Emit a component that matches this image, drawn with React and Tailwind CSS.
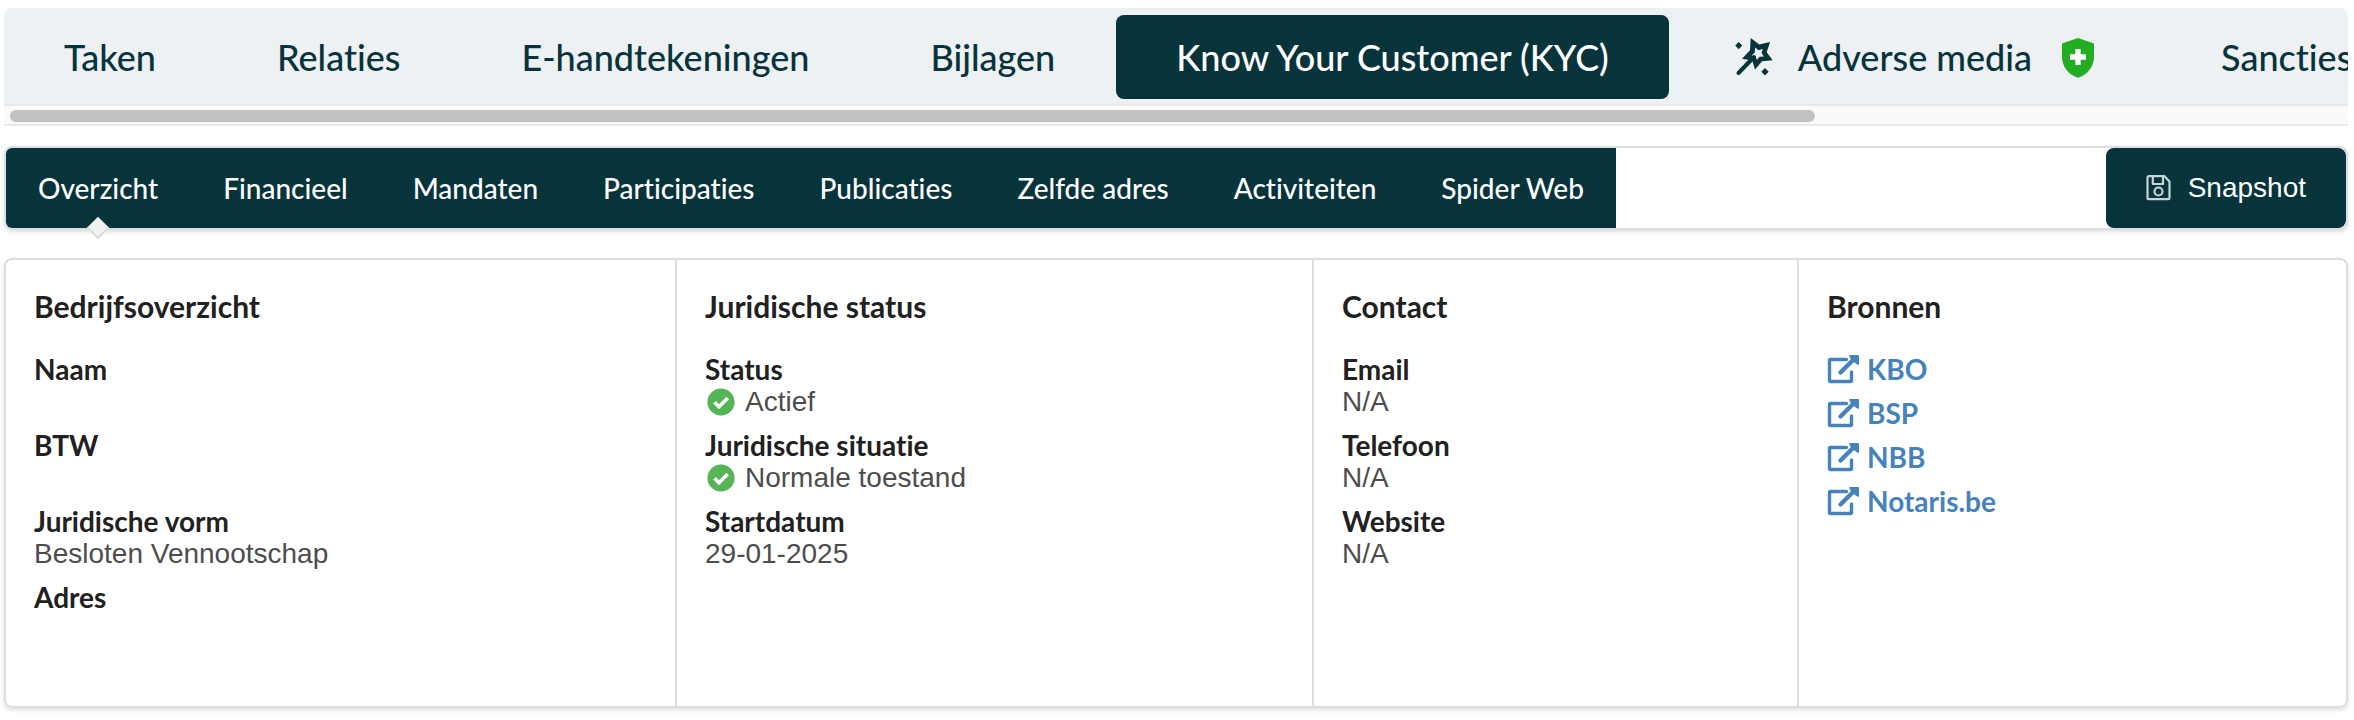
const TABS = [
  { label: "Taken" },
  { label: "Relaties" },
  { label: "E-handtekeningen" },
  { label: "Bijlagen" },
  { label: "Know Your Customer (KYC)", active: true },
  { label: "Adverse media", before: <WandIcon />, after: <ShieldIcon /> },
  { label: "Sancties" },
];

const SECTIONS = [
  "Overzicht",
  "Financieel",
  "Mandaten",
  "Participaties",
  "Publicaties",
  "Zelfde adres",
  "Activiteiten",
  "Spider Web",
];

const COMPANY = [
  { label: "Naam", value: "" },
  { label: "BTW", value: "" },
  { label: "Juridische vorm", value: "Besloten Vennootschap" },
  { label: "Adres", value: "", tall: true },
];

const LEGAL = [
  { label: "Status", value: "Actief", ok: true },
  { label: "Juridische situatie", value: "Normale toestand", ok: true },
  { label: "Startdatum", value: "29-01-2025" },
];

const CONTACT = [
  { label: "Email", value: "N/A" },
  { label: "Telefoon", value: "N/A" },
  { label: "Website", value: "N/A" },
];

const SOURCES = ["KBO", "BSP", "NBB", "Notaris.be"];

function WandIcon() {
  return (
    <svg viewBox="0 0 44 44" className="size-11 shrink-0" aria-hidden="true">
      <path d="M24 22 8.500 38" stroke="#07333b" strokeWidth="4" strokeLinecap="round" />
      <path
        fill="#07333b"
        fillRule="evenodd"
        d="M20.700 3 29.300 9.500 40 7 36.700 17.300 42.700 25.300 32 26.300 25 34.500 22.300 25.500 12 23.700 20 15.300ZM25.100 12.400 24.800 17.300 21.600 20.700 25.700 21.200 26.800 25 29.600 21.700 33.900 21.400 31.500 18.100 32.800 14 28.500 15.200Z"
      />
      <path fill="#07333b" d="M8.700 7 12.200 10.600 8.700 14.200 5.200 10.600ZM35 33 38.700 36.700 35 40.400 31.300 36.700Z" />
    </svg>
  );
}

function ShieldIcon() {
  return (
    <svg viewBox="0 0 44 44" className="size-11 shrink-0" aria-hidden="true">
      <path fill="#22ad22" d="M22 3 38 8.600V22C38 31.500 31 40.500 22 42.700 13 40.500 6 31.500 6 22V8.600Z" />
      <path fill="#fff" d="M19.300 14h5.400v5.300H30v5.400h-5.300V30h-5.400v-5.300H14v-5.400h5.300Z" />
    </svg>
  );
}

function SaveIcon() {
  return (
    <svg
      viewBox="0 0 28 28"
      className="size-7 shrink-0"
      fill="none"
      stroke="#c6d4da"
      strokeWidth="2.200"
      strokeLinejoin="round"
      aria-hidden="true"
    >
      <path d="M3 2.200H18.500L23.500 7.600V24Q23.500 25.200 22.300 25.200H3Q1.500 25.200 1.500 24V3.600Q1.500 2.200 3 2.200Z" />
      <path d="M6.800 2.600V10H17V2.600" />
      <circle cx="12.500" cy="17.500" r="4" />
    </svg>
  );
}

function CheckIcon() {
  return (
    <svg viewBox="0 0 32 32" className="size-8 shrink-0" aria-hidden="true">
      <circle cx="16" cy="16" r="13.600" fill="#56b456" />
      <path d="M9.500 16.300 14 20.800 22.700 12.100" fill="none" stroke="#fff" strokeWidth="3.600" />
    </svg>
  );
}

function ExternalIcon() {
  return (
    <svg
      viewBox="0 0 32 32"
      className="size-8 shrink-0"
      fill="none"
      stroke="currentColor"
      strokeWidth="3.400"
      strokeLinecap="round"
      aria-hidden="true"
    >
      <path d="M19.500 6.500H3.500Q2.500 6.500 2.500 7.500V27.500Q2.500 28.500 3.500 28.500H23.500Q24.500 28.500 24.500 27.500V19" strokeLinejoin="round" />
      <path d="M13.500 19.500 27 6" strokeWidth="4.400" />
      <path d="M23 2.500H31.500V11.500L28.500 10 23.500 5Z" fill="currentColor" strokeWidth="1" strokeLinejoin="round" />
    </svg>
  );
}

function Tab({ label, active, before, after }) {
  return (
    <button
      type="button"
      className={`flex h-[84px] shrink-0 items-center gap-6 whitespace-nowrap rounded-lg px-[60px] text-[36px] leading-none font-medium ${
        active ? "bg-[#07333b] text-white" : "text-[#07333b]"
      }`}
    >
      {before}
      <span>{label}</span>
      {after}
    </button>
  );
}

function Column({ title, children }) {
  return (
    <section className="border-r-2 border-[#dededf] p-7 last:border-r-0">
      <h2 className="mb-7 text-[30px] leading-9 font-bold text-[#212121]">{title}</h2>
      {children}
    </section>
  );
}

function Details({ items }) {
  return (
    <dl className="flex flex-col gap-2.5 text-[28px]">
      {items.map((item) => (
        <div key={item.label}>
          <dt className="leading-[34px] font-bold text-[#212121]">{item.label}</dt>
          <dd
            className={`flex items-center gap-2 font-['Liberation_Sans',sans-serif] leading-8 text-[#4d4d4d] ${
              item.tall ? "min-h-16" : "min-h-8"
            }`}
          >
            {item.ok && <CheckIcon />}
            {item.value}
          </dd>
        </div>
      ))}
    </dl>
  );
}

export default function App() {
  return (
    <main className="bg-white pt-2 pr-1.5 pb-3 pl-1 font-['Lato',sans-serif] [font-variant-ligatures:none]">
      <div className="mb-5 overflow-hidden rounded-t-lg">
        <nav className="flex gap-px overflow-hidden bg-[#edf1f4] pt-[7px] pb-[5px]">
          {TABS.map((tab) => (
            <Tab key={tab.label} {...tab} />
          ))}
        </nav>
        <div className="border-y-2 border-[#e8e8e8] bg-[#fafafa] px-1.5 pt-1 pb-0.5">
          <div className="h-3 w-[77.400%] rounded-full bg-[#c1c1c1]" />
        </div>
      </div>

      <div className="mb-7 flex justify-between rounded-lg border-2 border-[#dadfe2] shadow-[0_2px_4px_rgba(34,36,38,0.15)]">
        <nav className="flex gap-px rounded-l-md bg-[#07333b]">
          {SECTIONS.map((label, i) => (
            <a
              key={label}
              href="#"
              className="relative flex h-20 items-center whitespace-nowrap px-8 text-[28px] leading-none font-medium text-white"
            >
              {label}
              {i === 0 && (
                <span className="absolute -bottom-2 left-1/2 size-4 -translate-x-1/2 rotate-45 border-r-2 border-b-2 border-[#d9dbdc] bg-[#f2f2f2]" />
              )}
            </a>
          ))}
        </nav>
        <button
          type="button"
          className="flex h-20 items-center gap-3.5 rounded-lg bg-[#07333b] px-10 font-['Liberation_Sans',sans-serif] text-[28px] leading-none text-white"
        >
          <SaveIcon />
          Snapshot
        </button>
      </div>

      <div className="grid grid-cols-[671fr_637fr_485fr_547fr] rounded-lg border-2 border-[#dededf] shadow-[0_2px_4px_rgba(34,36,38,0.15)]">
        <Column title="Bedrijfsoverzicht">
          <Details items={COMPANY} />
        </Column>
        <Column title="Juridische status">
          <Details items={LEGAL} />
        </Column>
        <Column title="Contact">
          <Details items={CONTACT} />
        </Column>
        <Column title="Bronnen">
          <ul className="flex flex-col items-start gap-2.5 text-[28px] leading-[34px] font-bold text-[#4682bd]">
            {SOURCES.map((name) => (
              <li key={name}>
                <a href="#" className="flex items-center gap-2">
                  <ExternalIcon />
                  {name}
                </a>
              </li>
            ))}
          </ul>
        </Column>
      </div>
    </main>
  );
}
